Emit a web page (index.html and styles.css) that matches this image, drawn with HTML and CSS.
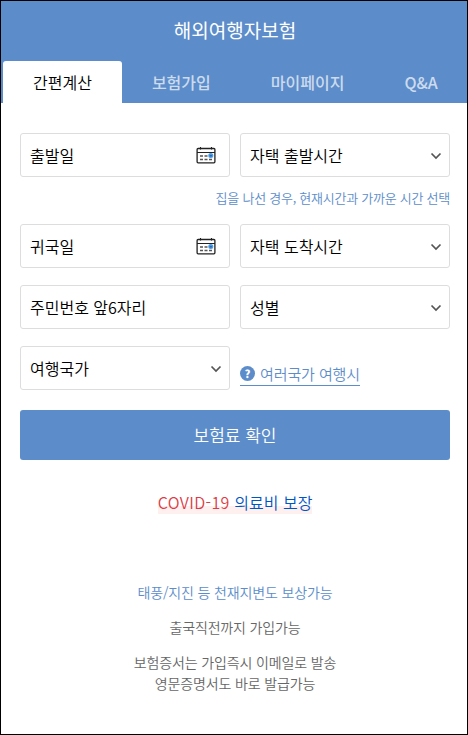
FILE: index.html
```html
<!DOCTYPE html>
<html lang="ko">
<head>
    <meta charset="UTF-8">
    <meta name="viewport" content="width=device-width, initial-scale=1.0">
    <title>해외여행자보험</title>
    <link rel="stylesheet" href="styles.css">
</head>
<body>
    <svg class="sprite" width="0" height="0">
        <symbol id="icon-calendar" viewBox="0 0 20 18">
            <rect x="1.1" y="2.5" width="17.8" height="14.3" rx="1" fill="#fff" stroke="#222" stroke-width="1.3"/>
            <path d="M1 6.5H19M4.5 1V3.5M15.5 1V3.5" stroke="#222" stroke-width="1.1"/>
            <path d="M4 10H7M8.5 10H11.5M4 13.5H7M8.5 13.5H11.5M13 13.5H16" stroke="#555" stroke-width="1.5"/>
            <circle cx="14.8" cy="9.6" r="2.5" fill="#4a9be8"/>
            <path d="M13.7 9.8H15.9" stroke="#1d5f9f" stroke-width="1.2"/>
        </symbol>
        <symbol id="icon-arrow" viewBox="0 0 12 8">
            <path d="M1.5 1.5L6 6L10.5 1.5" fill="none" stroke="#555" stroke-width="1.7"/>
        </symbol>
    </svg>

    <div class="container">
        <header class="header">
            <h1>해외여행자보험</h1>
            <nav class="tabs">
                <a class="tab active">간편계산</a>
                <a class="tab">보험가입</a>
                <a class="tab">마이페이지</a>
                <a class="tab">Q&amp;A</a>
            </nav>
        </header>

        <main class="content">
            <div class="row">
                <div class="field"><span>출발일</span><svg class="calendar"><use href="#icon-calendar"/></svg></div>
                <div class="field"><span>자택 출발시간</span><svg class="arrow"><use href="#icon-arrow"/></svg></div>
            </div>
            <p class="hint">집을 나선 경우, 현재시간과 가까운 시간 선택</p>
            <div class="row">
                <div class="field"><span>귀국일</span><svg class="calendar"><use href="#icon-calendar"/></svg></div>
                <div class="field"><span>자택 도착시간</span><svg class="arrow"><use href="#icon-arrow"/></svg></div>
            </div>
            <div class="row">
                <div class="field"><span>주민번호 앞6자리</span></div>
                <div class="field"><span>성별</span><svg class="arrow"><use href="#icon-arrow"/></svg></div>
            </div>
            <div class="row last">
                <div class="field"><span>여행국가</span><svg class="arrow"><use href="#icon-arrow"/></svg></div>
                <div class="help">
                    <a class="help-link"><span class="question">?</span>여러국가 여행시</a>
                </div>
            </div>
            <button class="submit">보험료 확인</button>

            <p class="covid"><span class="mark"><span class="red">COVID-19</span> 의료비 보장</span></p>

            <div class="notes">
                <p class="blue">태풍/지진 등 천재지변도 보상가능</p>
                <p>출국직전까지 가입가능</p>
                <p>보험증서는 가입즉시 이메일로 발송<br>영문증명서도 바로 발급가능</p>
            </div>
        </main>
    </div>
</body>
</html>
```
FILE: styles.css
```css
* {
    box-sizing: border-box;
}
body {
    margin: 0;
    font-family: "Noto Sans CJK KR", sans-serif;
    font-size: 16px;
    font-weight: 350;
    color: #000;
}
h1, p {
    margin: 0;
}
.sprite {
    display: block;
}
.container {
    height: 735px;
    border: 1px solid #000;
    background: #fff;
    overflow: hidden;
}
.header {
    height: 102px;
    background: #5c8dca;
    color: #fff;
}
h1 {
    height: 60px;
    line-height: 57px;
    font-size: 19px;
    font-weight: 400;
    text-align: center;
    padding-left: 2px;
}
.tabs {
    display: flex;
    padding-left: 2px;
}
.tab {
    height: 42px;
    line-height: 43px;
    padding: 0 30px;
    font-weight: 500;
    color: rgba(255, 255, 255, 0.7);
    white-space: nowrap;
}
.tab.active {
    background: #fff;
    color: #000;
    font-weight: 350;
    border-radius: 3px 3px 0 0;
}
.content {
    padding: 30px 17px 0 19px;
}
.row {
    display: grid;
    grid-template-columns: 210px 210px;
    gap: 10px;
    margin-bottom: 17px;
}
.row.last {
    margin-bottom: 20px;
}
.field {
    display: flex;
    align-items: center;
    justify-content: space-between;
    height: 44px;
    padding: 0 7px 0 9px;
    border: 1px solid #ddd;
    border-radius: 3px;
}
.calendar {
    width: 20px;
    height: 18px;
    margin-right: 6px;
}
.arrow {
    width: 12px;
    height: 8px;
    margin-top: 2px;
}
.hint {
    height: 47px;
    margin-top: -17px;
    line-height: 41px;
    font-size: 13px;
    letter-spacing: -0.25px;
    text-align: right;
    color: #5c8dca;
}
.help {
    display: flex;
    align-items: flex-start;
    padding-top: 16px;
}
.help-link {
    display: flex;
    align-items: center;
    height: 24px;
    font-size: 15px;
    letter-spacing: -0.1px;
    color: #5c8dca;
    border-bottom: 1px solid #5c8dca;
}
.question {
    width: 15px;
    height: 15px;
    margin-right: 5px;
    border-radius: 50%;
    background: #5c8dca;
    color: #fff;
    font-size: 11px;
    font-weight: 900;
    line-height: 15px;
    text-align: center;
}
.submit {
    display: block;
    width: 430px;
    height: 50px;
    padding: 0 0 2px;
    border: none;
    border-radius: 3px;
    background: #5c8dca;
    color: #fff;
    font-family: inherit;
    font-size: 17px;
    font-weight: 350;
}
.covid {
    height: 24px;
    margin-top: 31px;
    line-height: 22px;
    text-align: center;
    color: #0055c4;
}
.mark {
    display: inline-block;
    height: 23px;
    background: linear-gradient(transparent 66%, #fff0f0 66%);
}
.red {
    color: #dc3c46;
    letter-spacing: 0.4px;
}
.notes {
    margin-top: 67px;
    font-size: 14px;
    line-height: 21px;
    letter-spacing: -0.15px;
    text-align: center;
    color: #666;
}
.notes p {
    margin-bottom: 14px;
}
.notes .blue {
    color: #5c8dca;
}
```
